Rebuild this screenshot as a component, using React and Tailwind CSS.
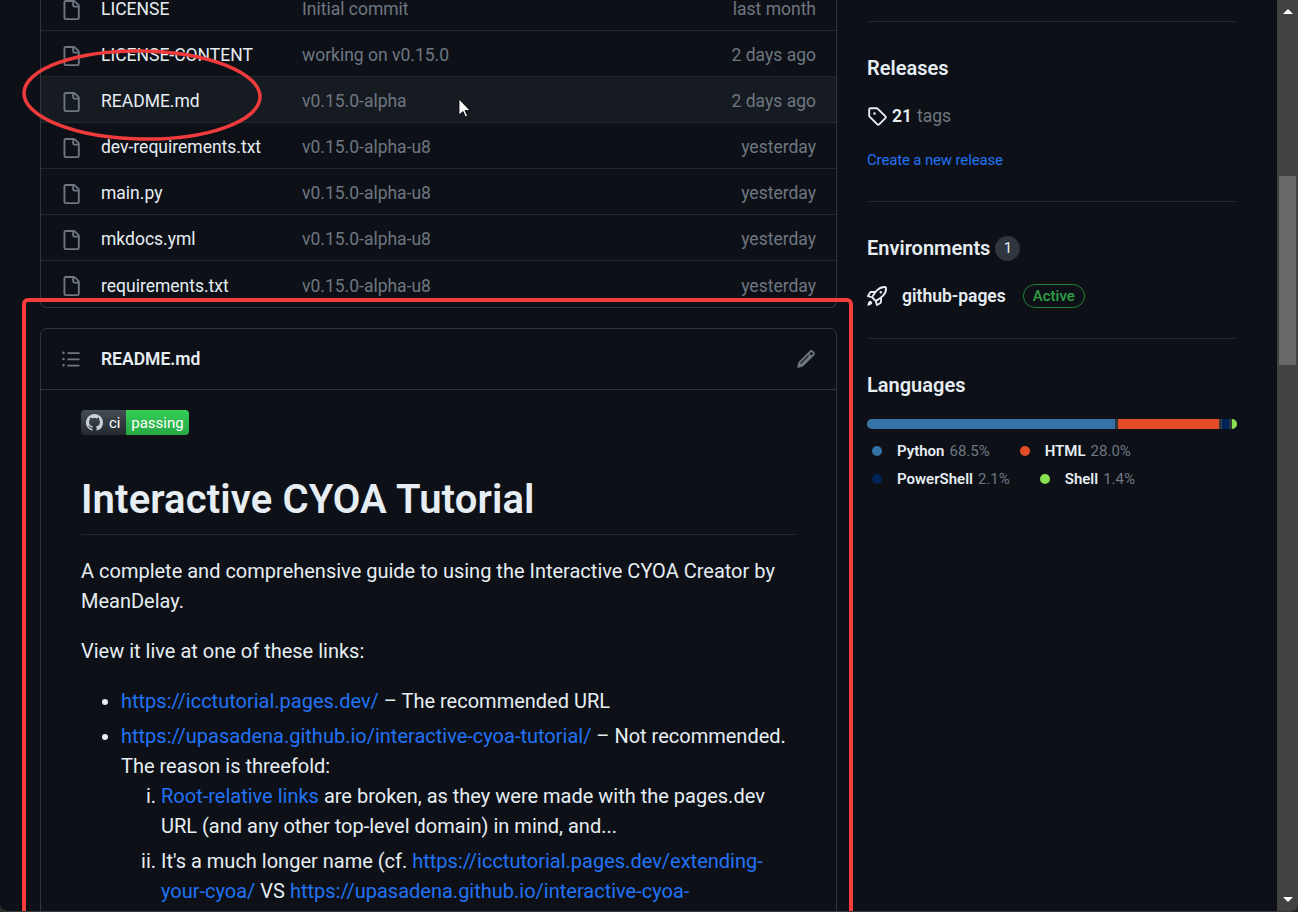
import React from 'react';

const files = [
    { name: 'LICENSE', message: 'Initial commit', time: 'last month' },
    { name: 'LICENSE-CONTENT', message: 'working on v0.15.0', time: '2 days ago' },
    { name: 'README.md', message: 'v0.15.0-alpha', time: '2 days ago', hover: true },
    { name: 'dev-requirements.txt', message: 'v0.15.0-alpha-u8', time: 'yesterday' },
    { name: 'main.py', message: 'v0.15.0-alpha-u8', time: 'yesterday' },
    { name: 'mkdocs.yml', message: 'v0.15.0-alpha-u8', time: 'yesterday' },
    { name: 'requirements.txt', message: 'v0.15.0-alpha-u8', time: 'yesterday' },
];

// octicons, 16px grid
const icons = {
    file: 'M2 1.75C2 .784 2.784 0 3.75 0h6.586c.464 0 .909.184 1.237.513l2.914 2.914c.329.328.513.773.513 1.237v9.586A1.75 1.75 0 0 1 13.25 16h-9.5A1.75 1.75 0 0 1 2 14.25Zm1.75-.25a.25.25 0 0 0-.25.25v12.5c0 .138.112.25.25.25h9.5a.25.25 0 0 0 .25-.25V6h-2.75A1.75 1.75 0 0 1 9 4.25V1.5Zm6.75.062V4.25c0 .138.112.25.25.25h2.688l-.011-.013-2.914-2.914-.013-.011Z',
    list: 'M5.75 2.5h8.5a.75.75 0 0 1 0 1.5h-8.5a.75.75 0 0 1 0-1.5Zm0 5h8.5a.75.75 0 0 1 0 1.5h-8.5a.75.75 0 0 1 0-1.5Zm0 5h8.5a.75.75 0 0 1 0 1.5h-8.5a.75.75 0 0 1 0-1.5ZM2 14a1 1 0 1 1 0-2 1 1 0 0 1 0 2Zm1-6a1 1 0 1 1-2 0 1 1 0 0 1 2 0ZM2 4a1 1 0 1 1 0-2 1 1 0 0 1 0 2Z',
    pencil: 'M11.013 1.427a1.75 1.75 0 0 1 2.474 0l1.086 1.086a1.75 1.75 0 0 1 0 2.474l-8.61 8.61c-.21.21-.47.364-.756.445l-3.251.93a.75.75 0 0 1-.927-.928l.929-3.25c.081-.286.235-.547.445-.758l8.61-8.61Zm.176 4.823L9.75 4.81l-6 6a.749.749 0 0 0-.188.316l-.22.772.772-.22a.749.749 0 0 0 .316-.188l6-6Zm1.238-3.763a.25.25 0 0 0-.354 0L10.811 3.75l1.439 1.44 1.263-1.263a.25.25 0 0 0 0-.354Z',
    tag: 'M1 7.775V2.75C1 1.784 1.784 1 2.75 1h5.025c.464 0 .91.184 1.238.513l6.25 6.25a1.75 1.75 0 0 1 0 2.474l-5.026 5.026a1.75 1.75 0 0 1-2.474 0l-6.25-6.25A1.752 1.752 0 0 1 1 7.775Zm1.5 0c0 .066.026.13.073.177l6.25 6.25a.25.25 0 0 0 .354 0l5.025-5.025a.25.25 0 0 0 0-.354l-6.25-6.25a.25.25 0 0 0-.177-.073H2.75a.25.25 0 0 0-.25.25ZM6 5a1 1 0 1 1 0 2 1 1 0 0 1 0-2Z',
    rocket: 'M14.064 0h.186C15.216 0 16 .784 16 1.75v.186a8.752 8.752 0 0 1-2.564 6.186l-.458.459c-.314.314-.641.616-.979.904v3.207c0 .608-.315 1.172-.833 1.49l-2.774 1.707a.749.749 0 0 1-1.11-.418l-.954-3.102a1.214 1.214 0 0 1-.145-.125L3.754 9.816a1.218 1.218 0 0 1-.124-.145L.528 8.717a.749.749 0 0 1-.418-1.11l1.71-2.774A1.748 1.748 0 0 1 3.31 4h3.204c.288-.338.59-.665.904-.979l.459-.458A8.749 8.749 0 0 1 14.064 0ZM8.938 3.623h-.002l-.458.458c-.76.76-1.437 1.598-2.02 2.5l-1.5 2.317 2.143 2.143 2.317-1.5c.902-.583 1.74-1.26 2.499-2.02l.459-.458a7.25 7.25 0 0 0 2.123-5.127V1.75a.25.25 0 0 0-.25-.25h-.186a7.249 7.249 0 0 0-5.125 2.123ZM3.56 14.56c-.732.732-2.334 1.045-3.005 1.148a.234.234 0 0 1-.201-.064.234.234 0 0 1-.064-.201c.103-.671.416-2.273 1.15-3.003a1.502 1.502 0 1 1 2.12 2.12Zm6.94-3.935c-.088.06-.177.118-.266.175l-2.35 1.521.548 1.783 1.949-1.2a.25.25 0 0 0 .119-.213ZM3.678 8.116 5.2 5.766c.058-.09.117-.178.176-.266H3.309a.25.25 0 0 0-.213.119l-1.2 1.95ZM12 5a1 1 0 1 1-2 0 1 1 0 0 1 2 0Z',
    github: 'M8 0C3.58 0 0 3.58 0 8c0 3.54 2.29 6.53 5.47 7.59.4.07.55-.17.55-.38 0-.19-.01-.82-.01-1.49-2.01.37-2.53-.49-2.69-.94-.09-.23-.48-.94-.82-1.13-.28-.15-.68-.52-.01-.53.63-.01 1.08.58 1.23.82.72 1.21 1.87.87 2.33.66.07-.52.28-.87.51-1.07-1.78-.2-3.64-.89-3.64-3.95 0-.87.31-1.59.82-2.15-.08-.2-.36-1.02.08-2.12 0 0 .67-.21 2.2.82.64-.18 1.32-.27 2-.27s1.36.09 2 .27c1.53-1.04 2.2-.82 2.2-.82.44 1.1.16 1.92.08 2.12.51.56.82 1.27.82 2.15 0 3.07-1.87 3.75-3.65 3.95.29.25.54.73.54 1.48 0 1.07-.01 1.93-.01 2.2 0 .21.15.46.55.38A8.01 8.01 0 0 0 16 8c0-4.42-3.58-8-8-8Z',
};

const Icon = ({ name, className }) => (
    <svg viewBox="0 0 16 16" fill="currentColor" className={`shrink-0 ${className}`}>
        <path d={icons[name]} />
    </svg>
);

const A = ({ children }) => <a className="text-[#2272f5]">{children}</a>;

const Legend = ({ color, name, pct }) => (
    <span className="inline-flex items-center mr-[25px] h-[28px] text-[15px]">
        <span className={`w-[10px] h-[10px] rounded-full ml-[5px] mr-[15px] ${color}`}></span>
        <span className="font-semibold text-[#e6edf3] mr-[5px]">{name}</span>
        <span className="text-[#6e7681]">{pct}</span>
    </span>
);

const App = () => {
    return (
        <div className="bg-[#2b2b2b] h-[912px] w-[1298px]">
            <div className="relative h-[912px] w-[1298px] overflow-hidden flex rounded-b-[8px] border-b border-[#3a3a3a] bg-[#0d1117] text-[#e6edf3] font-['Roboto',sans-serif]">
                <div className="flex-1 flex pl-[40px] min-w-0">
                    {/* Main column */}
                    <div className="w-[797px] shrink-0 -mt-[15px]">
                        <div className="border border-t-0 border-[#30363d] rounded-b-[7px]">
                            {files.map((f, i) => (
                                <div
                                    key={f.name}
                                    className={`flex items-center h-[46px] pt-[4px] pl-[20px] pr-[20px] text-[17.5px] ${i < files.length - 1 ? 'border-b border-[#21262d]' : ''} ${f.hover ? 'bg-[#161b22]' : ''}`}
                                >
                                    <Icon name="file" className="w-[20px] h-[20px] text-[#6e7681] mr-[20px]" />
                                    <span className="w-[201px] shrink-0 whitespace-nowrap">{f.name}</span>
                                    <span className="text-[#6e7681]">{f.message}</span>
                                    <span className="ml-auto text-[#6e7681]">{f.time}</span>
                                </div>
                            ))}
                        </div>

                        <div className="mt-[20px] border border-[#30363d] rounded-t-[7px] h-[700px]">
                            <div className="flex items-center h-[61px] pl-[20px] pr-[20px] border-b border-[#30363d]">
                                <Icon name="list" className="w-[20px] h-[20px] text-[#6e7681] mr-[20px]" />
                                <span className="text-[17.5px] font-semibold">README.md</span>
                                <Icon name="pencil" className="w-[20px] h-[20px] text-[#6e7681] ml-auto" />
                            </div>
                            <div className="px-[40px] pt-[20px] text-[20px] leading-[30px]">
                                <div className="flex h-[25px] w-[108px] rounded-[4px] overflow-hidden text-[15px] leading-[26px]">
                                    <span className="flex items-center w-[45px] pl-[5px] bg-gradient-to-b from-[#444d56] to-[#24292e] text-white">
                                        <Icon name="github" className="w-[17px] h-[17px] text-[#c9d1d9] mr-[6px]" />
                                        ci
                                    </span>
                                    <span className="flex-1 text-center bg-gradient-to-b from-[#34d058] to-[#28a745] text-white">passing</span>
                                </div>
                                <h1 className="mt-[40px] text-[40px] leading-[50px] font-semibold tracking-[0.12px] pb-[9px] border-b border-[#21262d]">Interactive CYOA Tutorial</h1>
                                <p className="mt-[21px]">A complete and comprehensive guide to using the Interactive CYOA Creator by MeanDelay.</p>
                                <p className="mt-[20px]">View it live at one of these links:</p>
                                <ul className="mt-[20px] pl-[40px] list-disc">
                                    <li><A>https://icctutorial.pages.dev/</A> – The recommended URL</li>
                                    <li className="mt-[5px]">
                                        <A>https://upasadena.github.io/interactive-cyoa-tutorial/</A> – Not recommended. The reason is threefold:
                                        <ol className="pl-[40px] list-[lower-roman]">
                                            <li><A>Root-relative links</A> are broken, as they were made with the pages.dev URL (and any other top-level domain) in mind, and...</li>
                                            <li className="mt-[5px]">It's a much longer name (cf. <A>https://icctutorial.pages.dev/extending-your-cyoa/</A> VS <A>https://upasadena.github.io/interactive-cyoa-tutorial/extending-your-cyoa/</A>)</li>
                                        </ol>
                                    </li>
                                </ul>
                            </div>
                        </div>
                    </div>

                    {/* Sidebar */}
                    <div className="w-[370px] ml-[30px] shrink-0">
                        <div className="h-[22px] border-b border-[#21262d]"></div>
                        <div className="h-[180px] border-b border-[#21262d] pt-[31px]">
                            <h2 className="text-[20px] leading-[30px] font-semibold">Releases</h2>
                            <div className="flex items-center mt-[18px] h-[30px] text-[17.5px]">
                                <Icon name="tag" className="w-[20px] h-[20px] text-[#e6edf3] mr-[5px]" />
                                <span className="font-semibold mr-[5px]">21</span>
                                <span className="text-[#6e7681]">tags</span>
                            </div>
                            <div className="mt-[18px] text-[15px] leading-[22px] tracking-[-0.15px] text-[#2272f5]">Create a new release</div>
                        </div>
                        <div className="h-[137px] border-b border-[#21262d] pt-[31px]">
                            <h2 className="flex items-center text-[20px] leading-[30px] font-semibold">
                                Environments
                                <span className="ml-[5px] w-[25px] h-[25px] rounded-full bg-[#30363d] text-[15px] font-normal flex items-center justify-center">1</span>
                            </h2>
                            <div className="flex items-center mt-[18px] h-[30px]">
                                <Icon name="rocket" className="w-[20px] h-[20px] mr-[15px]" />
                                <span className="text-[17.5px] font-semibold">github-pages</span>
                                <span className="ml-[17px] h-[24px] px-[9px] rounded-full border border-[#238636] text-[#2ea043] text-[15px] font-medium leading-[23px]">Active</span>
                            </div>
                        </div>
                        <div className="pt-[31px]">
                            <h2 className="text-[20px] leading-[30px] font-semibold">Languages</h2>
                            <div className="flex h-[10px] mt-[19px] rounded-full overflow-hidden bg-[#30363d] gap-[3px]">
                                <div className="w-[248px] bg-[#3572a5]"></div>
                                <div className="w-[101px] bg-[#e34c26]"></div>
                                <div className="w-[7px] bg-[#012456]"></div>
                                <div className="flex-1 bg-[#89e051]"></div>
                            </div>
                            <div className="flex flex-wrap mt-[8px]">
                                <Legend color="bg-[#3572a5]" name="Python" pct="68.5%" />
                                <Legend color="bg-[#e34c26]" name="HTML" pct="28.0%" />
                                <Legend color="bg-[#012456]" name="PowerShell" pct="2.1%" />
                                <Legend color="bg-[#89e051]" name="Shell" pct="1.4%" />
                            </div>
                        </div>
                    </div>
                </div>

                {/* Scrollbar */}
                <div className="w-[21px] shrink-0 bg-[#424242] flex flex-col items-center">
                    <div className="h-[176px] w-full flex justify-center pt-[9px]">
                        <div className="w-0 h-0 border-x-[5px] border-x-transparent border-b-[5px] border-b-white"></div>
                    </div>
                    <div className="h-[189px] w-[17px] bg-[#686868]"></div>
                    <div className="flex-1 w-full flex justify-center items-end pb-[9px]">
                        <div className="w-0 h-0 border-x-[5px] border-x-transparent border-t-[5px] border-t-white"></div>
                    </div>
                </div>

                {/* Annotations drawn over the page */}
                <svg className="absolute inset-0 pointer-events-none" width="1298" height="912" viewBox="0 0 1298 912" fill="none">
                    <ellipse cx="142" cy="95" rx="118" ry="44" stroke="#ef3b3b" strokeWidth="3.5" transform="rotate(1 142 95)" />
                    <rect x="24" y="300" width="827" height="640" rx="4" stroke="#f43c3c" strokeWidth="4" />
                    <path d="M459 99v16l4-3.500 2.500 5.500 2-1-2.500-5.500h5z" fill="#fff" stroke="#000" strokeWidth="0.8" />
                </svg>
            </div>
        </div>
    );
};

export default App;
